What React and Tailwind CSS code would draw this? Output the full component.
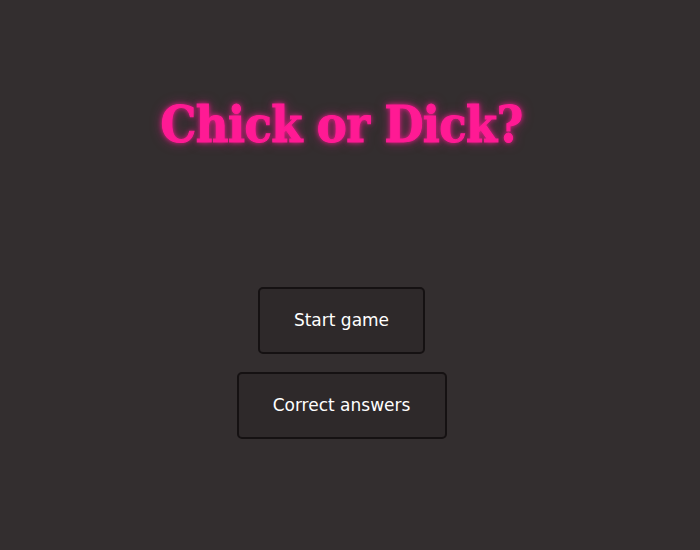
export default function App() {
  return (
    <div className="w-[700px] h-[550px] bg-[#332e2f] pr-[17px] flex flex-col items-center overflow-hidden">
      <h1
        className="mt-[100px] text-[#ff1a94] text-[50px] font-black leading-none tracking-[-0.6px] [font-stretch:condensed] [font-family:'DejaVu_Serif_Condensed','DejaVu_Serif',serif] [-webkit-text-stroke:1px_#ff1a94] [text-shadow:0_0_5px_#ff1a94,0_0_12px_#ff1a9488]"
      >
        Chick or Dick?
      </h1>
      <div className="mt-[137px] flex flex-col items-center gap-[18px] [font-family:'DejaVu_Sans',sans-serif]">
        <button className="w-[167px] h-[67px] rounded-[5px] border-2 border-[#151112] bg-[#2e292a] text-[17px] text-white">
          Start game
        </button>
        <button className="w-[210px] h-[67px] rounded-[5px] border-2 border-[#151112] bg-[#2e292a] text-[17px] text-white">
          Correct answers
        </button>
      </div>
    </div>
  );
}
